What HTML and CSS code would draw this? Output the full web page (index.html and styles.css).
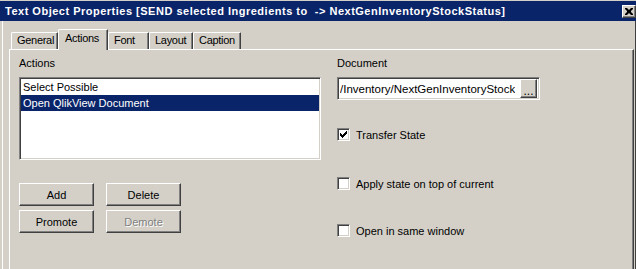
FILE: index.html
```html
<!DOCTYPE html>
<html lang="en">
<head>
    <meta charset="UTF-8">
    <title>Text Object Properties</title>
    <link rel="stylesheet" href="styles.css">
</head>
<body>
    <div class="window">
        <div class="titlebar">
            <span class="title">Text Object Properties [SEND selected Ingredients to&nbsp; -&gt; NextGenInventoryStockStatus]</span>
            <button class="close" title="Close">
                <svg viewBox="0 0 8 7" width="8" height="7">
                    <path d="M0 0h2l2 2 2-2h2v1l-2 2v1l2 2v1h-2l-2-2-2 2h-2v-1l2-2v-1l-2-2z" fill="#000"/>
                </svg>
            </button>
        </div>
        <div class="client">
            <div class="tabs">
                <div class="tab tab-general">General</div>
                <div class="tab tab-actions active">Actions</div>
                <div class="tab tab-font">Font</div>
                <div class="tab tab-layout">Layout</div>
                <div class="tab tab-caption">Caption</div>
            </div>
            <div class="page">
                <div class="col-left">
                    <div class="label">Actions</div>
                    <div class="listbox">
                        <div class="item">Select Possible</div>
                        <div class="item selected">Open QlikView Document</div>
                    </div>
                    <div class="buttons">
                        <button class="btn">Add</button>
                        <button class="btn">Delete</button>
                        <button class="btn">Promote</button>
                        <button class="btn" disabled>Demote</button>
                    </div>
                </div>
                <div class="col-right">
                    <div class="label">Document</div>
                    <div class="field">
                        <span class="field-text">/Inventory/NextGenInventoryStock</span>
                        <button class="browse">...</button>
                    </div>
                    <label class="check check-transfer">
                        <span class="box checked">
                            <svg viewBox="0 0 7 7" width="7" height="7">
                                <path d="M0 2h1v1h1v1h1v-1h1v-1h1v-1h1v-1h1v3h-1v1h-1v1h-1v1h-1v1h-1v-1h-1v-1h-1z" fill="#000"/>
                            </svg>
                        </span>
                        Transfer State
                    </label>
                    <label class="check check-apply">
                        <span class="box"></span>
                        Apply state on top of current
                    </label>
                    <label class="check check-window">
                        <span class="box"></span>
                        Open in same window
                    </label>
                </div>
            </div>
        </div>
    </div>
</body>
</html>
```

FILE: styles.css
```css
* {
    box-sizing: border-box;
}
body {
    margin: 0;
    font-family: "Liberation Sans", Arial, sans-serif;
    font-size: 11px;
    color: #000;
    background: #d4d0c8;
}
.window {
    width: 636px;
    height: 269px;
    overflow: hidden;
    background: #d4d0c8;
    border-top: 1px solid #d4d0c8;
    display: flex;
    flex-direction: column;
}
.titlebar {
    height: 20px;
    flex: none;
    background: #0a246a;
    display: flex;
    align-items: center;
    justify-content: space-between;
    padding-left: 5px;
}
.title {
    color: #fff;
    font-weight: bold;
    font-size: 11px;
    letter-spacing: 0.5px;
    white-space: nowrap;
}
.close {
    width: 14px;
    height: 13px;
    margin: 1px 0 0 0;
    padding: 0;
    background: #d4d0c8;
    border: 1px solid;
    border-color: #fff #404040 #404040 #fff;
    box-shadow: inset -1px -1px #808080;
    display: flex;
    align-items: center;
    justify-content: center;
}
.close svg {
    display: block;
    margin: 0 1px 1px 0;
}
.client {
    flex: 1;
    margin-left: 2px;
    border-left: 1px solid #fff;
    border-right: 1px solid #404040;
    padding: 8px 1px 0 6px;
    display: flex;
    flex-direction: column;
}
.tabs {
    display: flex;
    align-items: flex-end;
    height: 20px;
    padding-left: 2px;
    position: relative;
    z-index: 1;
}
.tab {
    height: 17px;
    line-height: 15px;
    padding-left: 5px;
    letter-spacing: -0.3px;
    white-space: nowrap;
    border-top: 1px solid #fff;
    border-left: 1px solid #fff;
    border-right: 1px solid #404040;
    box-shadow: inset -1px 0 #808080;
    border-top-left-radius: 2px;
    border-top-right-radius: 1px;
    background: #d4d0c8;
}
.tab-general { width: 47px; }
.tab-actions { width: 50px; }
.tab-font { width: 41px; }
.tab-layout { width: 44px; }
.tab-caption { width: 48px; }
.tab.active {
    height: 21px;
    margin-bottom: -1px;
    line-height: 16px;
    padding-left: 6px;
}
.page {
    flex: 1;
    border-top: 1px solid #fff;
    border-left: 1px solid #fff;
    border-right: 1px solid #404040;
    box-shadow: inset -1px 0 #808080;
    padding: 7px 9px 0 9px;
    display: flex;
    gap: 16px;
}
.col-left {
    width: 302px;
}
.label {
    height: 13px;
    line-height: 13px;
    margin-bottom: 7px;
}
.listbox {
    height: 83px;
    background: #fff;
    border: 1px solid;
    border-color: #808080 #fff #fff #808080;
    box-shadow: inset 1px 1px #404040, inset -1px -1px #d4d0c8;
    padding: 1px;
}
.item {
    height: 16px;
    line-height: 16px;
    padding-left: 2px;
}
.item.selected {
    background: #0a246a;
    color: #fff;
}
.buttons {
    margin-top: 23px;
    display: grid;
    grid-template-columns: 75px 75px;
    grid-auto-rows: 23px;
    column-gap: 12px;
    row-gap: 4px;
}
.btn, .browse {
    font-family: inherit;
    font-size: 11px;
    color: #000;
    padding: 0;
    background: #d4d0c8;
    border: 1px solid;
    border-color: #fff #404040 #404040 #fff;
    box-shadow: inset -1px -1px #808080;
}
.btn:disabled {
    color: #808080;
    text-shadow: 1px 1px #fff;
}
.col-right {
    width: 260px;
    display: flex;
    flex-direction: column;
}
.field {
    width: 203px;
    height: 23px;
    background: #fff;
    border: 1px solid;
    border-color: #808080 #fff #fff #808080;
    box-shadow: inset 1px 1px #404040, inset -1px -1px #d4d0c8;
    padding: 1px 2px 1px 2px;
    display: flex;
    align-items: center;
    justify-content: space-between;
}
.field-text {
    white-space: nowrap;
    overflow: hidden;
    font-size: 11.5px;
}
.browse {
    width: 17px;
    height: 19px;
    flex: none;
    line-height: 22px;
    font-size: 12px;
}
.check {
    display: flex;
    align-items: center;
    gap: 6px;
    height: 13px;
}
.check-transfer { margin-top: 28px; }
.check-apply { margin-top: 36px; }
.check-window { margin-top: 34px; }
.box {
    width: 13px;
    height: 13px;
    flex: none;
    background: #fff;
    border: 1px solid;
    border-color: #808080 #fff #fff #808080;
    box-shadow: inset 1px 1px #404040, inset -1px -1px #d4d0c8;
    display: flex;
    align-items: center;
    justify-content: center;
}
.box svg {
    display: block;
}
```
